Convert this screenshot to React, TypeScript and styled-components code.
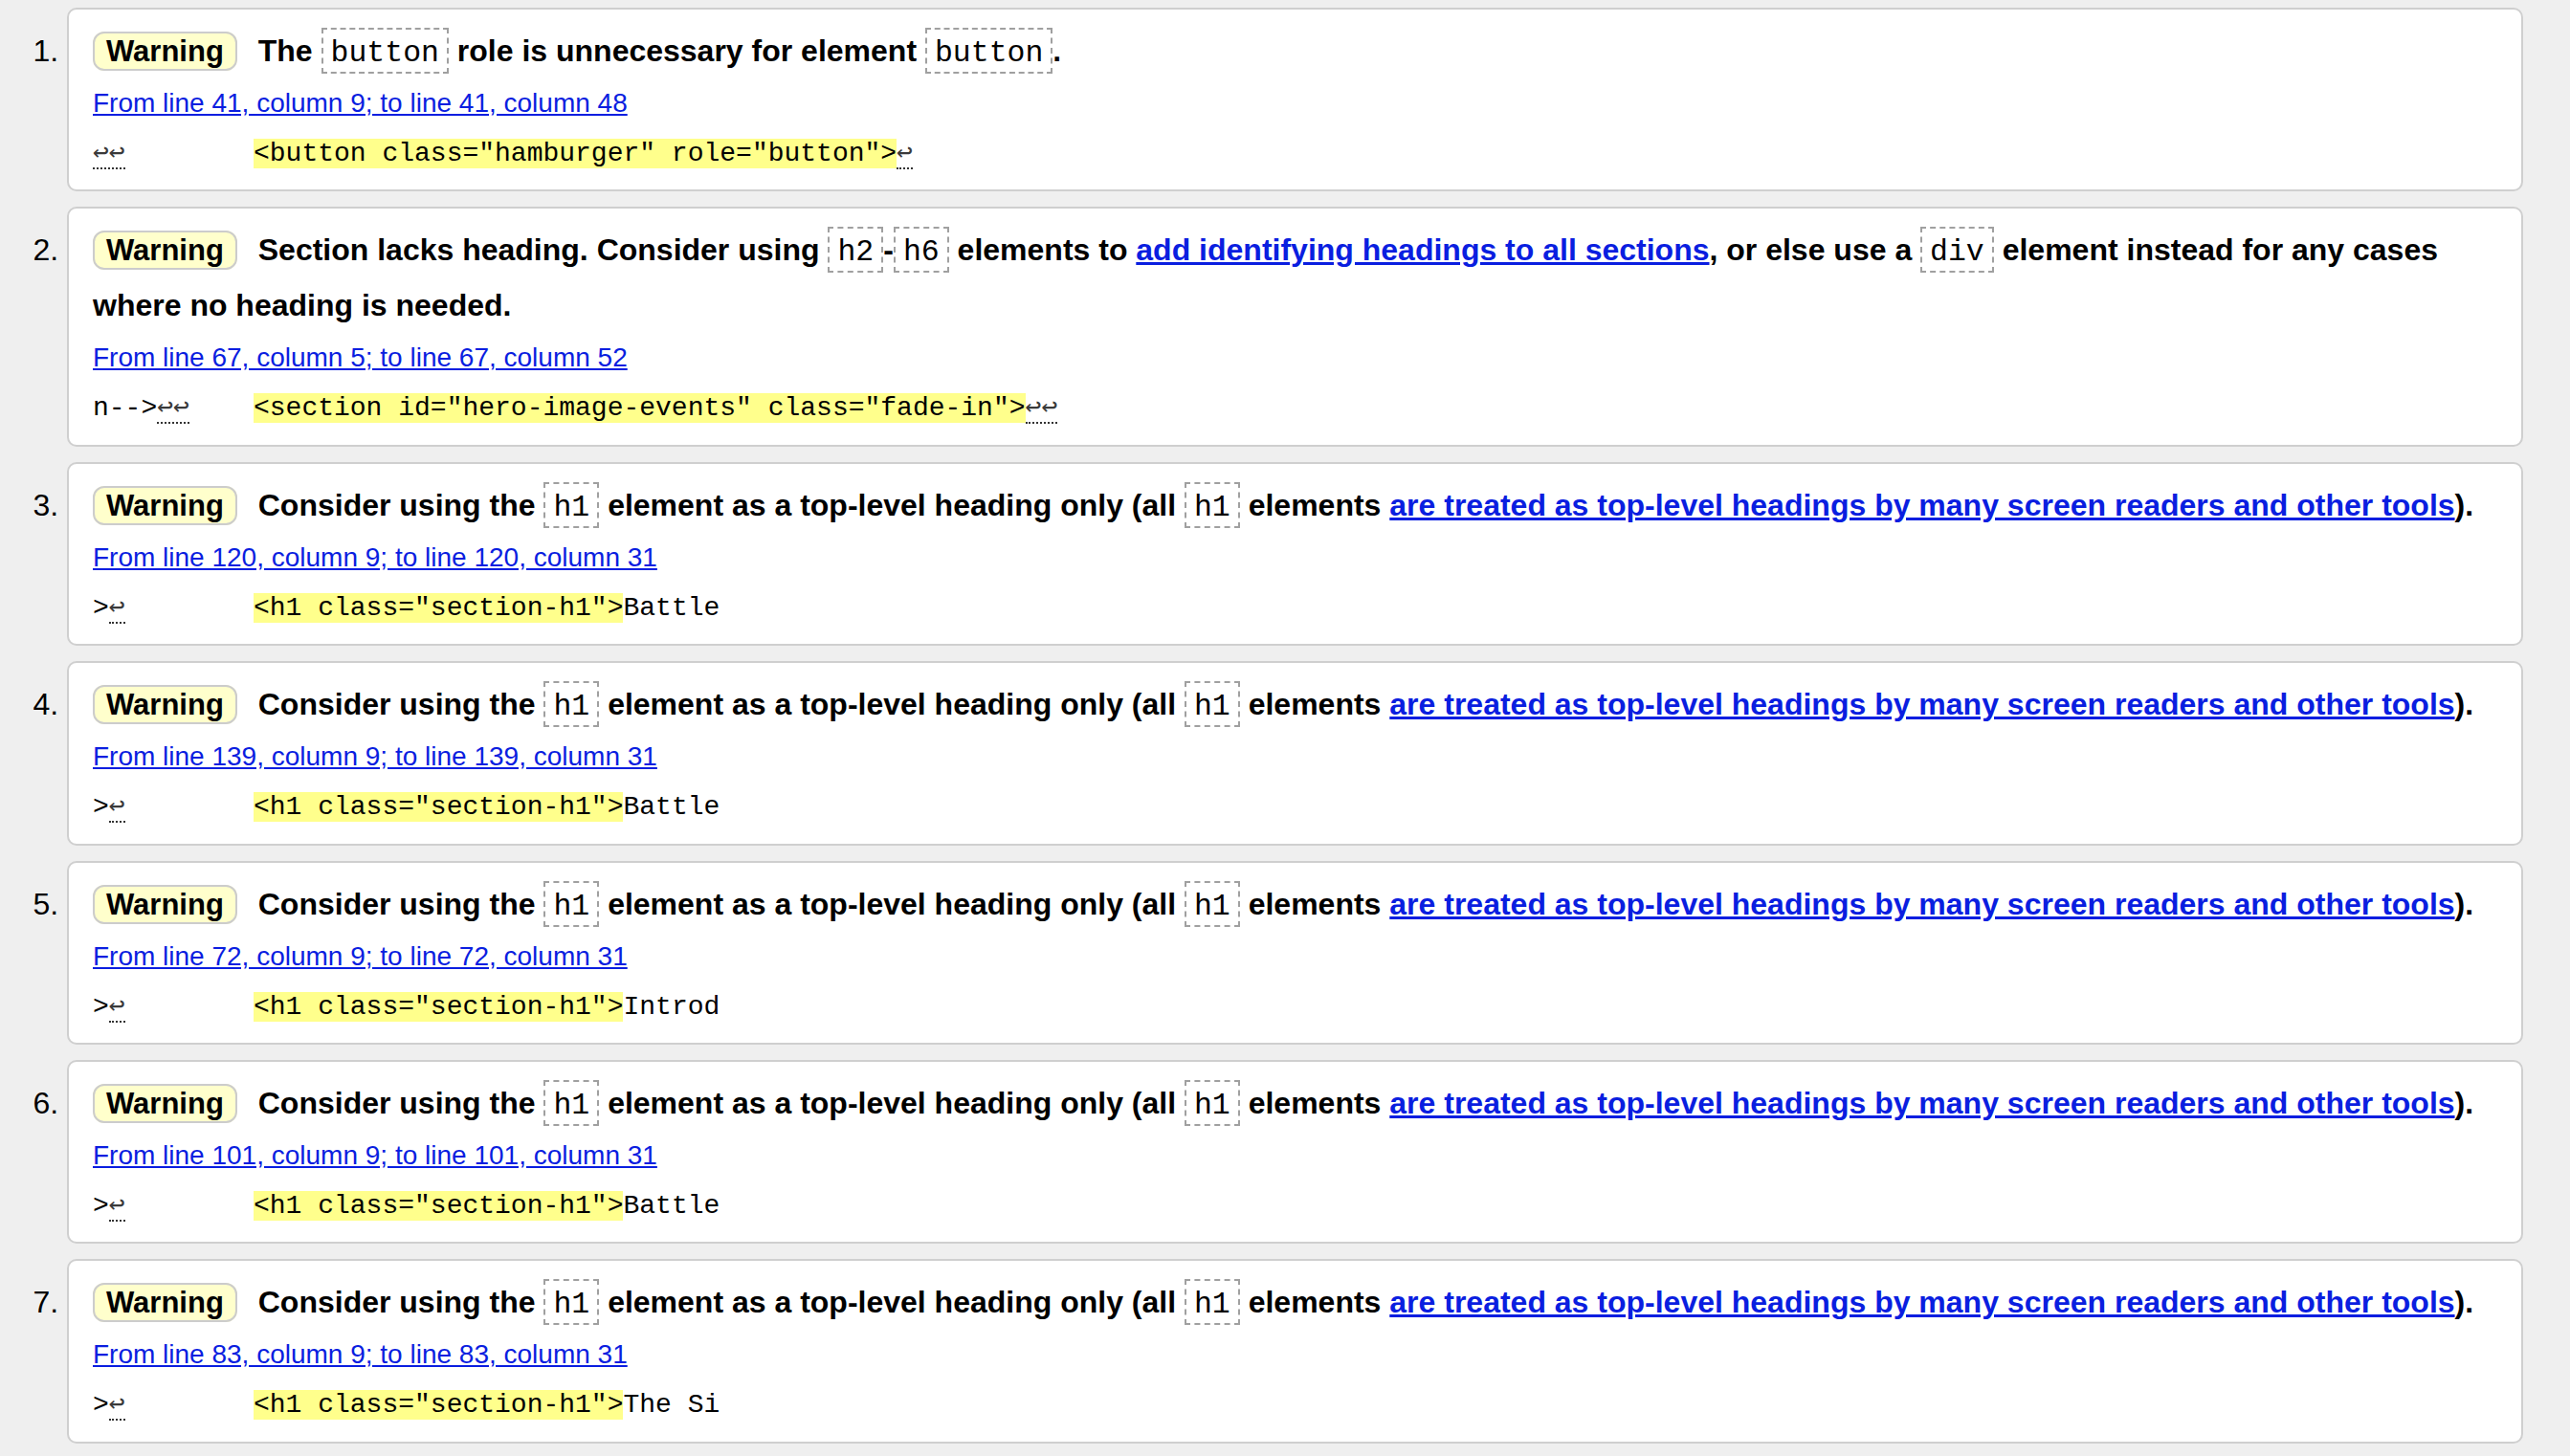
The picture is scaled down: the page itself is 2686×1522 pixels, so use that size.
import React from "react";
import styled, { createGlobalStyle } from "styled-components";

const GlobalStyle = createGlobalStyle`
  html, body {
    margin: 0;
    padding: 0;
    background: #efefef;
    font-family: "Liberation Sans", Arial, Helvetica, sans-serif;
    color: #000;
  }
`;

const List = styled.ol`
  margin: 0;
  padding: 8px 49px 8px 70px;
  list-style: decimal outside;
`;

const Item = styled.li`
  background: #fff;
  border: 2px solid #cfcfcf;
  border-radius: 10px;
  padding: 14px 24px 13.4px 25px;
  margin: 0 0 16px 0;
  font-size: 32px;
  line-height: 58px;
`;

const Message = styled.p`
  margin: 0;
  font-weight: bold;
  font-size: 32px;
  line-height: 58px;
`;

const Badge = styled.strong`
  font-size: 31px;
  line-height: 1;
  background: #ffffcc;
  border: 2px solid #cccccc;
  border-radius: 12px;
  padding: 1px 12px;
  margin-right: 13px;
`;

const Code = styled.code`
  font-family: "Liberation Mono", "Courier New", monospace;
  font-weight: normal;
  font-size: 31.5px;
  line-height: 1;
  border: 2px dashed #a0a0a0;
  padding: 7px 8px 2px;
`;

const Link = styled.a`
  color: #0a1ee0;
  text-decoration: underline;
`;

const Location = styled.p`
  margin: 0;
  font-size: 28px;
  line-height: 51px;
`;

const Extract = styled.p`
  margin: 0;
  font-size: 28px;
  line-height: 52px;
  white-space: pre;
  tab-size: 168px;
`;

const ExtractCode = styled.code`
  font-family: "Liberation Mono", "Courier New", monospace;
  font-size: 28px;
  line-height: 1;
  color: #000;
`;

const Highlight = styled.b`
  font-weight: normal;
  background: #ffff8c;
`;

const LineBreak = styled.span`
  font-family: "DejaVu Sans Mono", monospace;
  line-height: 1;
  color: #3a3a3a;
  border-bottom: 2px dotted #333;
`;

type Part = string | { code: string } | { link: string };

interface Warning {
  message: Part[];
  location: string;
  before: string;
  beforeBreaks: number;
  mark: string;
  after: string;
  afterBreaks: number;
}

const h1Message: Part[] = [
  "Consider using the ",
  { code: "h1" },
  " element as a top-level heading only (all ",
  { code: "h1" },
  " elements ",
  { link: "are treated as top-level headings by many screen readers and other tools" },
  ").",
];

const h1Mark = '<h1 class="section-h1">';

const warnings: Warning[] = [
  {
    message: [
      "The ",
      { code: "button" },
      " role is unnecessary for element ",
      { code: "button" },
      ".",
    ],
    location: "From line 41, column 9; to line 41, column 48",
    before: "",
    beforeBreaks: 2,
    mark: '<button class="hamburger" role="button">',
    after: "",
    afterBreaks: 1,
  },
  {
    message: [
      "Section lacks heading. Consider using ",
      { code: "h2" },
      "-",
      { code: "h6" },
      " elements to ",
      { link: "add identifying headings to all sections" },
      ", or else use a ",
      { code: "div" },
      " element instead for any cases where no heading is needed.",
    ],
    location: "From line 67, column 5; to line 67, column 52",
    before: "n-->",
    beforeBreaks: 2,
    mark: '<section id="hero-image-events" class="fade-in">',
    after: "",
    afterBreaks: 2,
  },
  {
    message: h1Message,
    location: "From line 120, column 9; to line 120, column 31",
    before: ">",
    beforeBreaks: 1,
    mark: h1Mark,
    after: "Battle",
    afterBreaks: 0,
  },
  {
    message: h1Message,
    location: "From line 139, column 9; to line 139, column 31",
    before: ">",
    beforeBreaks: 1,
    mark: h1Mark,
    after: "Battle",
    afterBreaks: 0,
  },
  {
    message: h1Message,
    location: "From line 72, column 9; to line 72, column 31",
    before: ">",
    beforeBreaks: 1,
    mark: h1Mark,
    after: "Introd",
    afterBreaks: 0,
  },
  {
    message: h1Message,
    location: "From line 101, column 9; to line 101, column 31",
    before: ">",
    beforeBreaks: 1,
    mark: h1Mark,
    after: "Battle",
    afterBreaks: 0,
  },
  {
    message: h1Message,
    location: "From line 83, column 9; to line 83, column 31",
    before: ">",
    beforeBreaks: 1,
    mark: h1Mark,
    after: "The Si",
    afterBreaks: 0,
  },
];

const renderPart = (p: Part, i: number) => {
  if (typeof p === "string") return <React.Fragment key={i}>{p}</React.Fragment>;
  if ("code" in p) return <Code key={i}>{p.code}</Code>;
  return (
    <Link key={i} href="#">
      {p.link}
    </Link>
  );
};

const Breaks = ({ count }: { count: number }) =>
  count > 0 ? <LineBreak title="Line break">{"\u21A9".repeat(count)}</LineBreak> : null;

export default function App() {
  return (
    <>
      <GlobalStyle />
      <List>
        {warnings.map((w, idx) => (
          <Item key={idx}>
            <Message>
              <Badge>Warning</Badge> {w.message.map(renderPart)}
            </Message>
            <Location>
              <Link href="#">{w.location}</Link>
            </Location>
            <Extract>
              <ExtractCode>
                {w.before}
                <Breaks count={w.beforeBreaks} />
                {"\t"}
                <Highlight>{w.mark}</Highlight>
                {w.after}
                <Breaks count={w.afterBreaks} />
              </ExtractCode>
            </Extract>
          </Item>
        ))}
      </List>
    </>
  );
}
